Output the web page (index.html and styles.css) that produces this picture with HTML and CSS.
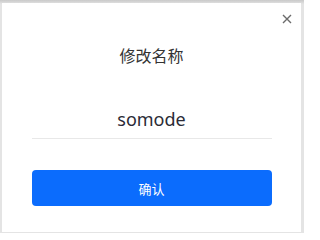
FILE: index.html
```html
<!DOCTYPE html>
<html lang="zh">
<head>
<meta charset="utf-8">
<link rel="stylesheet" href="styles.css">
</head>
<body>
<div class="dialog">
  <button class="close" aria-label="关闭">
    <svg width="10" height="10" viewBox="0 0 10 10"><path d="M1 1L9 9M9 1L1 9" stroke="#6b6b6b" stroke-width="1.4" fill="none"/></svg>
  </button>
  <div class="title">修改名称</div>
  <div class="field">somode</div>
  <button class="confirm">确认</button>
</div>
</body>
</html>
```
FILE: styles.css
```css
html {
  margin: 0;
  padding: 0;
  background: #fff;
}
body {
  margin: 0;
  width: 304px;
  height: 233px;
  overflow: hidden;
  background: linear-gradient(#c9c9c9, #e4e4e4 4px, #e4e4e4);
  font-family: "Noto Sans", "Noto Sans CJK SC", sans-serif;
  padding: 3px 3px 1px 2px;
  box-sizing: border-box;
}
.dialog {
  position: relative;
  background: #fff;
  height: 229px;
  box-sizing: border-box;
  display: flex;
  flex-direction: column;
  align-items: center;
  padding: 0 30px;
}
.close {
  position: absolute;
  top: 10px;
  right: 8px;
  width: 12px;
  height: 12px;
  padding: 0;
  border: 0;
  background: none;
  display: flex;
  align-items: center;
  justify-content: center;
}
.title {
  margin-top: 42px;
  font-size: 16px;
  line-height: 22px;
  color: #333;
}
.field {
  margin-top: 40px;
  width: 240px;
  text-align: center;
  font-size: 18px;
  line-height: 24px;
  padding-bottom: 7px;
  color: #2b2b36;
  border-bottom: 1px solid #e8e8e8;
}
.confirm {
  margin-top: 31px;
  width: 240px;
  height: 36px;
  border: 0;
  border-radius: 4px;
  background: #0b6cfd;
  color: #fff;
  font-family: "Noto Sans CJK SC", sans-serif;
  font-size: 13px;
}
```
